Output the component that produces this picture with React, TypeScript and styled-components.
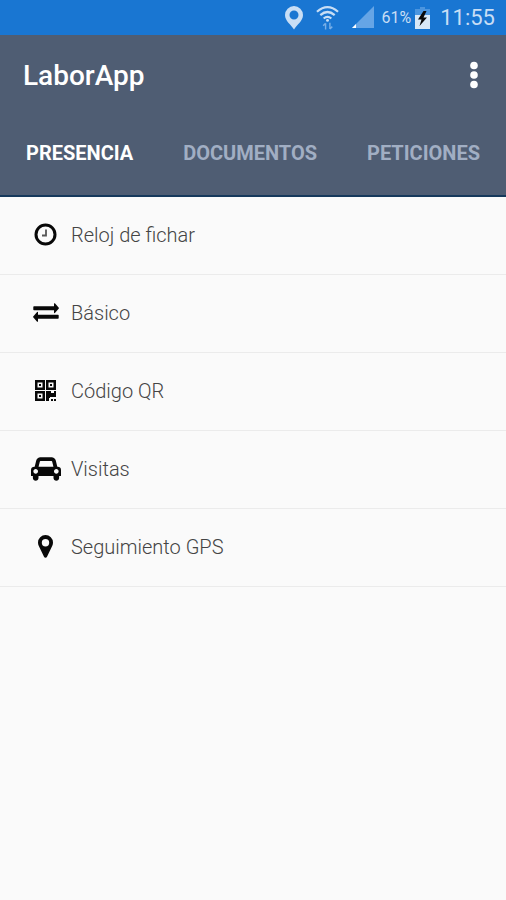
import React from "react";
import styled, { createGlobalStyle } from "styled-components";

const GlobalStyle = createGlobalStyle`
  * { box-sizing: border-box; }
  body {
    margin: 0;
    background: #fafafa;
    font-family: Roboto, "Liberation Sans", sans-serif;
  }
  svg { display: block; flex: none; }
`;

const Screen = styled.div`
  min-height: 100vh;
  background: #fafafa;
`;

const StatusBar = styled.div`
  display: flex;
  align-items: center;
  justify-content: flex-end;
  height: 35px;
  padding: 0 11px;
  background: #1976d2;
  color: #c8def5;
`;

const Signals = styled.div`
  display: flex;
  align-items: center;
  gap: 13px;
  margin-right: 8px;
`;

const Battery = styled.span`
  display: flex;
  align-items: center;
  gap: 4px;
  margin-right: 10px;
  font-size: 16px;
`;

const Clock = styled.time`
  font-size: 22px;
  line-height: 35px;
`;

const Header = styled.header`
  background: #4f5d73;
  border-bottom: 2px solid #16395c;
`;

const TitleBar = styled.div`
  display: flex;
  align-items: center;
  justify-content: space-between;
  height: 80px;
  padding: 0 16px 0 23px;
`;

const Title = styled.h1`
  margin: 0;
  font-size: 28px;
  font-weight: 500;
  color: #fff;
`;

const MenuButton = styled.button`
  display: flex;
  align-items: center;
  justify-content: center;
  width: 32px;
  height: 48px;
  padding: 0;
  border: 0;
  background: none;
  color: #fff;
`;

const Tabs = styled.div`
  display: flex;
  justify-content: space-between;
  height: 80px;
  padding: 0 26px;
`;

const Tab = styled.button<{ $active: boolean }>`
  padding: 0 0 4px;
  border: 0;
  background: none;
  font-family: inherit;
  font-size: 20px;
  font-weight: 700;
  color: ${({ $active }) => ($active ? "#fff" : "#a1aec3")};
`;

const List = styled.ul`
  margin: 0;
  padding: 0;
  list-style: none;
`;

const Row = styled.li`
  height: 78px;
  border-bottom: 1px solid #ebebeb;
`;

const RowButton = styled.button`
  display: flex;
  align-items: center;
  gap: 10px;
  width: 100%;
  height: 100%;
  padding: 0 30px 2px;
  border: 0;
  background: none;
  font-family: inherit;
  font-size: 20px;
  font-weight: 300;
  color: #444;
  text-align: left;
`;

const IconSlot = styled.span`
  display: flex;
  justify-content: center;
  width: 31px;
  color: #080808;
`;

const PinStatusIcon = () => (
  <svg width="18" height="24" viewBox="0 0 18 24" fill="currentColor" aria-hidden="true">
    <path fillRule="evenodd" d="M9 0a9 9 0 0 0-9 9c0 6 6 9.500 9 14.500C12 18.500 18 15 18 9a9 9 0 0 0-9-9Zm0 4.500a4.500 4.500 0 1 1 0 9 4.500 4.500 0 0 1 0-9Z" />
  </svg>
);

const WifiIcon = () => (
  <svg width="23" height="26" viewBox="0 0 24 26" fill="none" stroke="currentColor" strokeWidth="2.300" aria-hidden="true">
    <path d="M1 6.500Q12-3 23 6.500M4.500 10Q12 3.500 19.500 10M8 13.500q4-3.500 8 0" />
    <circle cx="12" cy="15.500" r="1.500" fill="currentColor" stroke="none" />
    <g stroke="#78afe7" strokeWidth="1.500">
      <path d="M10 25v-6.500M7.500 21l2.500-2.500M14.500 18v6.500M17 22l-2.500 2.500" />
    </g>
  </svg>
);

const SignalIcon = () => (
  <svg width="22" height="23" viewBox="0 0 22 23" aria-hidden="true">
    <path d="M22 0v22H0Z" fill="#66a5e6" />
    <path d="M4 18v4H0Z" fill="#fff" />
  </svg>
);

const BatteryIcon = () => (
  <svg width="15" height="22" viewBox="0 0 15 22" aria-hidden="true">
    <path d="M5 0h5v2h5v6H0V2h5Z" fill="#4b95df" />
    <path d="M0 8h15v14H0Z" fill="#d9e8f7" />
    <path d="M8.500 4 3 12.500h3.500L4.500 19 12 10.500H8.500L11.500 4Z" fill="#080808" />
  </svg>
);

const MoreIcon = () => (
  <svg width="8" height="28" viewBox="0 0 8 28" fill="currentColor" aria-hidden="true">
    <circle cx="4" cy="4.500" r="3.800" />
    <circle cx="4" cy="14" r="3.800" />
    <circle cx="4" cy="23.500" r="3.800" />
  </svg>
);

const ClockIcon = () => (
  <svg width="23" height="23" viewBox="0 0 23 23" fill="none" stroke="currentColor" aria-hidden="true">
    <circle cx="11.500" cy="11.500" r="9.500" strokeWidth="3" />
    <path d="M12 6.500v6H8" strokeWidth="1.800" stroke="#555" />
  </svg>
);

const ExchangeIcon = () => (
  <svg width="26" height="19" viewBox="0 0 26 19" fill="currentColor" aria-hidden="true">
    <path d="M1 3.300h20V.7q.1-.8.9-.4l3.700 4.200q.6.700 0 1.300l-3.700 4.200q-.8.400-.9-.4V7.200H1q-.7 0-.7-.7V4q0-.7.7-.7Z" />
    <path d="M25 11.800H5V9.400q-.1-.8-.9-.4L.4 13.200q-.6.700 0 1.300l3.700 4.200q.8.400.9-.4v-2.600h20q.7 0 .7-.7v-2.500q0-.7-.7-.7Z" />
  </svg>
);

const QrIcon = () => (
  <svg width="21" height="21" viewBox="0 0 21 21" fill="currentColor" aria-hidden="true">
    <path fillRule="evenodd" d="M0 0h10v10H0ZM2.500 2.500v5h5v-5ZM11 0h10v10H11ZM13.500 2.500v5h5v-5ZM0 11h10v10H0ZM2.500 13.500v5h5v-5Z" />
    <path d="M4 4h2v2H4ZM15 4h2v2h-2ZM4 15h2v2H4ZM11 11h5v2h3v-2h2v6h-6v1h-1v3h-3ZM16 19h2v2h-2ZM19 19h2v2h-2Z" />
  </svg>
);

const CarIcon = () => (
  <svg width="30" height="24" viewBox="0 0 2048 1600" fill="currentColor" aria-hidden="true">
    <path d="M480 960q0-66-47-113t-113-47-113 47-47 113 47 113 113 47 113-47 47-113zm36-320h1016l-89-357q-2-8-14-17.500t-21-9.500h-768q-9 0-21 9.500t-14 17.500zm1372 320q0-66-47-113t-113-47-113 47-47 113 47 113 113 47 113-47 47-113zm160-96v384q0 14-9 23t-23 9h-96v128q0 80-56 136t-136 56-136-56-56-136v-128h-1024v128q0 80-56 136t-136 56-136-56-56-136v-128h-96q-14 0-23-9t-9-23v-384q0-93 65.500-158.500t158.500-65.500h28l105-419q23-94 104-157.500t179-63.500h768q98 0 179 63.500t104 157.500l105 419h28q93 0 158.500 65.500t65.500 158.500z" />
  </svg>
);

const MarkerIcon = () => (
  <svg width="15" height="23" viewBox="0 0 15 23" fill="currentColor" aria-hidden="true">
    <path fillRule="evenodd" d="M7.500 0A7.500 7.500 0 0 0 0 7.500q0 1.800.7 3.200L6 21.800q.5 1 1.500 1t1.500-1l5.300-11.100q.7-1.400.7-3.200A7.500 7.500 0 0 0 7.500 0Zm0 4a3.700 3.700 0 1 1 0 7.400 3.700 3.700 0 0 1 0-7.400Z" />
  </svg>
);

const tabs = ["PRESENCIA", "DOCUMENTOS", "PETICIONES"];

const items = [
  { label: "Reloj de fichar", Icon: ClockIcon },
  { label: "Básico", Icon: ExchangeIcon },
  { label: "Código QR", Icon: QrIcon },
  { label: "Visitas", Icon: CarIcon },
  { label: "Seguimiento GPS", Icon: MarkerIcon },
];

export default function App() {
  const [active, setActive] = React.useState(tabs[0]);
  return (
    <Screen>
      <GlobalStyle />
      <StatusBar>
        <Signals>
          <PinStatusIcon />
          <WifiIcon />
          <SignalIcon />
        </Signals>
        <Battery>
          61%
          <BatteryIcon />
        </Battery>
        <Clock>11:55</Clock>
      </StatusBar>
      <Header>
        <TitleBar>
          <Title>LaborApp</Title>
          <MenuButton type="button" aria-label="Más opciones">
            <MoreIcon />
          </MenuButton>
        </TitleBar>
        <Tabs role="tablist">
          {tabs.map((tab) => (
            <Tab
              key={tab}
              type="button"
              role="tab"
              aria-selected={tab === active}
              $active={tab === active}
              onClick={() => setActive(tab)}
            >
              {tab}
            </Tab>
          ))}
        </Tabs>
      </Header>
      <List>
        {items.map(({ label, Icon }) => (
          <Row key={label}>
            <RowButton type="button">
              <IconSlot>
                <Icon />
              </IconSlot>
              {label}
            </RowButton>
          </Row>
        ))}
      </List>
    </Screen>
  );
}
